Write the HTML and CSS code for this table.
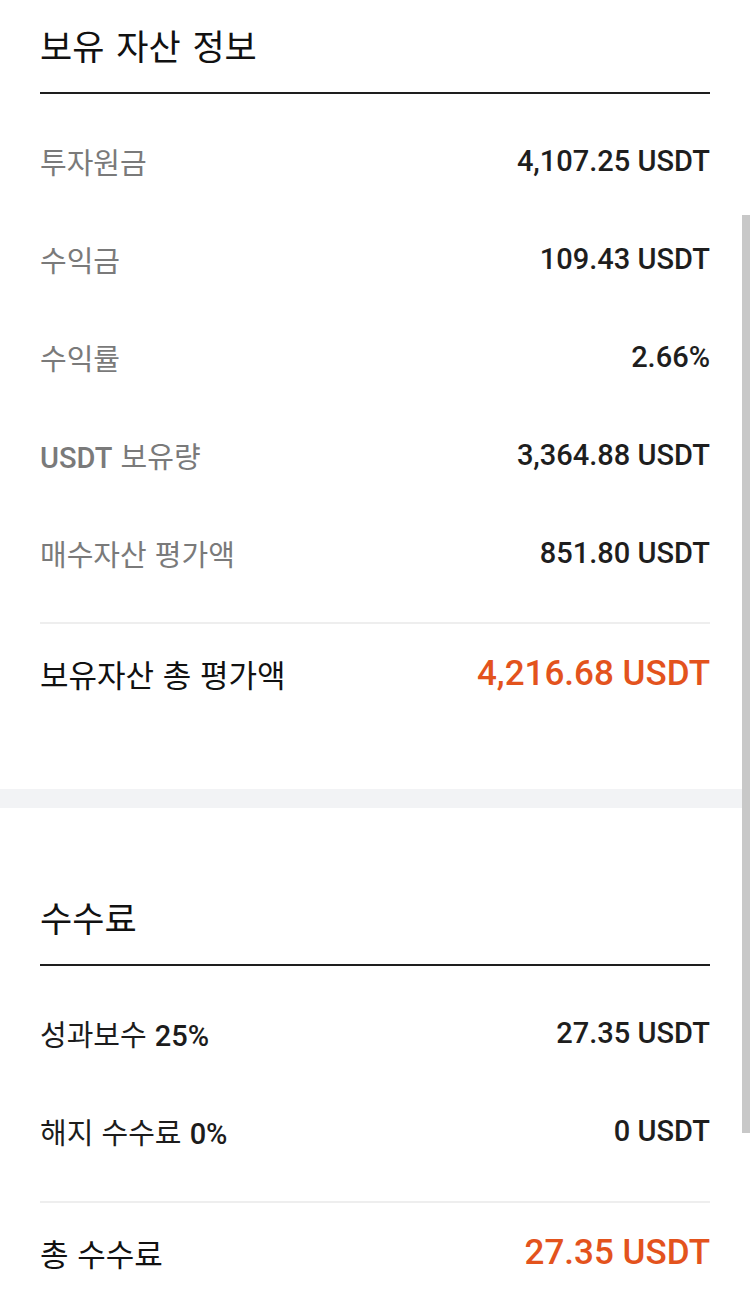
FILE: index.html
```html
<!DOCTYPE html>
<html lang="ko">
<head>
<meta charset="utf-8">
<title>보유 자산 정보</title>
<link rel="stylesheet" href="styles.css">
</head>
<body>
<main class="page">
  <section class="section">
    <header class="head"><h2 class="title">보유 자산 정보</h2></header>
    <div class="rows">
      <div class="row"><span class="label">투자원금</span><span class="value">4,107.25 USDT</span></div>
      <div class="row"><span class="label">수익금</span><span class="value">109.43 USDT</span></div>
      <div class="row"><span class="label">수익률</span><span class="value">2.66%</span></div>
      <div class="row"><span class="label"><b class="latin">USDT</b> 보유량</span><span class="value">3,364.88 USDT</span></div>
      <div class="row"><span class="label">매수자산 평가액</span><span class="value">851.80 USDT</span></div>
    </div>
    <div class="total"><span class="total-label">보유자산 총 평가액</span><span class="total-value">4,216.68 USDT</span></div>
  </section>
  <div class="band"></div>
  <section class="section section-fee">
    <header class="head"><h2 class="title">수수료</h2></header>
    <div class="rows rows-fee">
      <div class="row"><span class="label dark">성과보수 <b class="latin">25%</b></span><span class="value">27.35 USDT</span></div>
      <div class="row"><span class="label dark">해지 수수료 <b class="latin">0%</b></span><span class="value">0 USDT</span></div>
    </div>
    <div class="total"><span class="total-label">총 수수료</span><span class="total-value">27.35 USDT</span></div>
  </section>
</main>
<div class="scrollbar"></div>
</body>
</html>
```

FILE: styles.css
```css
html, body {
  margin: 0;
  padding: 0;
  background: #ffffff;
  overflow: hidden;
}

body {
  font-family: Roboto, "Noto Sans CJK KR", sans-serif;
  color: #222222;
}

.page {
  width: 750px;
}

.section {
  padding: 0 40px;
}

.section-fee {
  padding-top: 64px;
}

.head {
  padding: 22px 0 24px;
  border-bottom: 2px solid #1e1e1e;
}

.title {
  margin: 0;
  font-family: "Noto Sans CJK KR", sans-serif;
  font-weight: 400;
  font-size: 35px;
  line-height: 46px;
  color: #111111;
  word-spacing: 2px;
}

.rows {
  padding: 18px 0 20px;
}

.rows-fee {
  padding: 18px 0 21px;
}

.row {
  height: 98px;
  display: flex;
  align-items: center;
  justify-content: space-between;
}

.label {
  font-family: "Noto Sans CJK KR", sans-serif;
  font-size: 29px;
  color: #7a7a7a;
  font-weight: 400;
}

.label.dark {
  color: #1c1c1c;
}

.latin {
  font-family: Roboto, sans-serif;
  font-weight: 500;
}

.value {
  font-family: Roboto, sans-serif;
  font-weight: 500;
  font-size: 29px;
  color: #1e1e1e;
}

.total {
  border-top: 2px solid #eeeeee;
  height: 98px;
  display: flex;
  align-items: center;
  justify-content: space-between;
  margin-bottom: 67px;
}

.section-fee .total {
  margin-bottom: 0;
}

.total-label {
  font-family: "Noto Sans CJK KR", sans-serif;
  font-size: 31px;
  color: #111111;
}

.total-value {
  font-family: Roboto, sans-serif;
  font-weight: 500;
  font-size: 35px;
  color: #e3531d;
}

.band {
  height: 19px;
  background: #f2f3f5;
}

.scrollbar {
  position: absolute;
  left: 742px;
  top: 215px;
  width: 8px;
  height: 918px;
  background: #c8c8c8;
}
```
